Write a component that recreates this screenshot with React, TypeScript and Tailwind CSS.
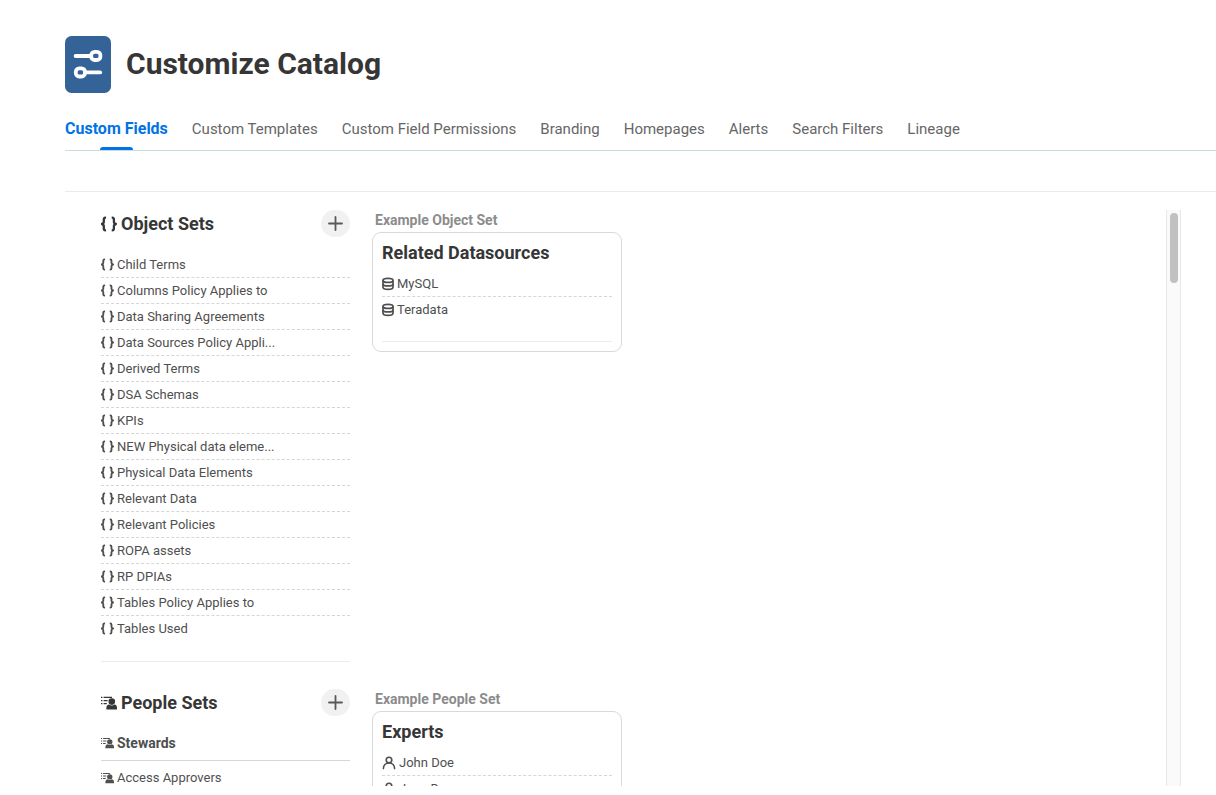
import type { ReactNode } from 'react';

const tabs = [
  'Custom Fields',
  'Custom Templates',
  'Custom Field Permissions',
  'Branding',
  'Homepages',
  'Alerts',
  'Search Filters',
  'Lineage',
];

const objectSets = [
  'Child Terms',
  'Columns Policy Applies to',
  'Data Sharing Agreements',
  'Data Sources Policy Appli...',
  'Derived Terms',
  'DSA Schemas',
  'KPIs',
  'NEW Physical data eleme...',
  'Physical Data Elements',
  'Relevant Data',
  'Relevant Policies',
  'ROPA assets',
  'RP DPIAs',
  'Tables Policy Applies to',
  'Tables Used',
];

function CatalogLogo() {
  return (
    <svg viewBox="0 0 46 57" className="h-[57px] w-[46px] shrink-0" aria-hidden="true">
      <rect width="46" height="57" rx="6.5" fill="#336397" />
      <g fill="none" stroke="#fff" strokeWidth="3.8" strokeLinecap="round">
        <path d="M10.600 20H26" />
        <rect x="26.200" y="15.800" width="9.200" height="8.200" rx="3.400" />
        <path d="M20 36.400H35.200" />
        <rect x="10.800" y="32.300" width="9.200" height="8.200" rx="3.400" />
      </g>
    </svg>
  );
}

function BracesIcon({ className }: { className: string }) {
  return (
    <svg viewBox="0 0 16 16" className={className} aria-hidden="true">
      <g fill="none" stroke="currentColor" strokeWidth="2.3" strokeLinejoin="round">
        <path d="M5 1.700H4.500Q2.800 1.700 2.800 3.500V5.800Q2.800 7.600 .8 8Q2.800 8.400 2.800 10.200V12.500Q2.800 14.300 4.500 14.300H5" />
        <path d="M10.700 1.700H11.200Q12.900 1.700 12.900 3.500V5.800Q12.900 7.600 14.900 8Q12.900 8.400 12.900 10.200V12.500Q12.900 14.300 11.200 14.300H10.700" />
      </g>
    </svg>
  );
}

function PeopleSetIcon({ className }: { className: string }) {
  return (
    <svg viewBox="0 0 16 14" className={className} aria-hidden="true">
      <g fill="currentColor">
        <path d="M0 .8h1.400v1.300H0zM0 3.900h1.400v1.300H0zM0 7h1.400v1.300H0zM2.600 .8H11v1.300H2.600zM2.600 3.900h4v1.300h-4zM2.600 7h3.200v1.300H2.600z" />
        <circle cx="10.800" cy="5.600" r="3.300" />
        <path d="M5.400 13.600v-1.800q0-2.800 2.900-3.200 2.500 1.800 5 0 2.700.4 2.700 3.200v1.800z" />
      </g>
    </svg>
  );
}

function DatabaseIcon() {
  return (
    <svg viewBox="0 0 12 14" className="h-3.5 w-3 shrink-0" aria-hidden="true">
      <g fill="none" stroke="currentColor" strokeWidth="1.7">
        <ellipse cx="6" cy="3.400" rx="5" ry="2" />
        <path d="M1 3.400v6.900c0 1.200 2.200 2.100 5 2.100s5-.9 5-2.100V3.400" />
        <path d="M1 6.900c0 1.200 2.200 2 5 2s5-.8 5-2" />
      </g>
    </svg>
  );
}

function PersonIcon() {
  return (
    <svg viewBox="0 0 14 14" className="h-3.5 w-3.5 shrink-0" aria-hidden="true">
      <g fill="none" stroke="currentColor" strokeWidth="1.6" strokeLinecap="round">
        <circle cx="7" cy="4.100" r="2.800" />
        <path d="M1.400 12.600C1.400 9.400 3.600 7 7 7s5.600 2.400 5.600 5.600" />
      </g>
    </svg>
  );
}

function SetHeader({ icon, title }: { icon: ReactNode; title: string }) {
  return (
    <div className="flex h-[27px] items-center justify-between">
      <h2 className="flex items-center gap-1 text-lg leading-6 font-bold text-[#363636]">
        {icon}
        {title}
      </h2>
      <button
        type="button"
        aria-label={`Add to ${title}`}
        className="flex h-[27px] w-[29px] items-center justify-center rounded-full bg-[#f1f1f1] text-[#595959]"
      >
        <svg viewBox="0 0 15 15" className="size-[15px]" aria-hidden="true">
          <path d="M7.500 1v13M1 7.500h13" stroke="currentColor" strokeWidth="1.8" strokeLinecap="round" />
        </svg>
      </button>
    </div>
  );
}

function ExampleCard({
  label,
  title,
  icon,
  items,
}: {
  label: string;
  title: string;
  icon: ReactNode;
  items: string[];
}) {
  return (
    <div className="w-[250px] shrink-0">
      <p className="mb-0.5 pl-[3px] text-sm leading-5 font-bold text-[#8c8c8c]">{label}</p>
      <div className="rounded-[9px] border border-[#d9d9d9] px-[9px] pt-2 pb-[9px]">
        <h3 className="mb-1.5 text-lg leading-6 font-bold text-[#363636]">{title}</h3>
        <ul className="border-b border-[#ebebeb] pb-[18px]">
          {items.map((item) => (
            <li
              key={item}
              className="flex h-[26px] items-center gap-[3px] border-b border-dashed border-[#d6d6d6] last:border-transparent"
            >
              {icon}
              {item}
            </li>
          ))}
        </ul>
      </div>
    </div>
  );
}

export default function App() {
  return (
    <div className="flex h-screen flex-col overflow-hidden bg-white pb-[9px] pl-[65px] font-['Roboto',sans-serif] text-[13px] text-[#4f4f4f]">
      <header className="flex items-center gap-[15px] pt-9">
        <CatalogLogo />
        <h1 className="pb-0.5 text-[30px] leading-9 font-bold text-[#363636]">Customize Catalog</h1>
      </header>

      <nav className="mt-[22px] flex h-9 shrink-0 gap-6 border-b border-[#ccdbe2] text-[15px] leading-7 whitespace-nowrap text-[#666]">
        {tabs.map((tab, i) => (
          <a
            key={tab}
            href="#"
            className={
              i === 0
                ? 'flex flex-col items-center justify-between text-base leading-7 font-bold text-[#0073e6]'
                : 'block'
            }
          >
            {tab}
            {i === 0 && <span className="h-[3px] w-[33px] rounded-t-sm bg-[#0073e6]" />}
          </a>
        ))}
      </nav>

      <main className="mt-10 flex min-h-0 flex-1 border-t border-[#ebebeb] pt-[18px] pr-[35px]">
        <div className="min-w-0 flex-1 overflow-hidden pl-9">
          <section className="flex gap-[22px]">
            <div className="w-[249px] shrink-0 border-b border-[#ebebeb] pb-[19px]">
              <SetHeader icon={<BracesIcon className="size-4" />} title="Object Sets" />
              <ul className="mt-[15px]">
                {objectSets.map((name) => (
                  <li
                    key={name}
                    className="flex h-[26px] items-center gap-[3px] border-b border-dashed border-[#d6d6d6] last:border-transparent"
                  >
                    <BracesIcon className="size-[13px] shrink-0" />
                    {name}
                  </li>
                ))}
              </ul>
            </div>
            <ExampleCard
              label="Example Object Set"
              title="Related Datasources"
              icon={<DatabaseIcon />}
              items={['MySQL', 'Teradata']}
            />
          </section>

          <section className="mt-[27px] flex gap-[22px]">
            <div className="w-[249px] shrink-0">
              <SetHeader icon={<PeopleSetIcon className="h-3.5 w-4" />} title="People Sets" />
              <ul className="mt-[9px]">
                <li className="flex h-9 items-center gap-[3px] border-b border-[#d6d6d6] text-sm font-bold">
                  <PeopleSetIcon className="h-3 w-[13px] shrink-0" />
                  Stewards
                </li>
                <li className="flex h-[33px] items-center gap-[3px]">
                  <PeopleSetIcon className="h-3 w-[13px] shrink-0" />
                  Access Approvers
                </li>
              </ul>
            </div>
            <ExampleCard
              label="Example People Set"
              title="Experts"
              icon={<PersonIcon />}
              items={['John Doe', 'Jane Doe']}
            />
          </section>
        </div>

        <div className="flex w-[15px] shrink-0 justify-center border-x border-[#e8e8e8] bg-[#fafafa] pt-[3px]">
          <div className="h-[70px] w-2 rounded-full bg-[#c1c1c1]" />
        </div>
      </main>
    </div>
  );
}
